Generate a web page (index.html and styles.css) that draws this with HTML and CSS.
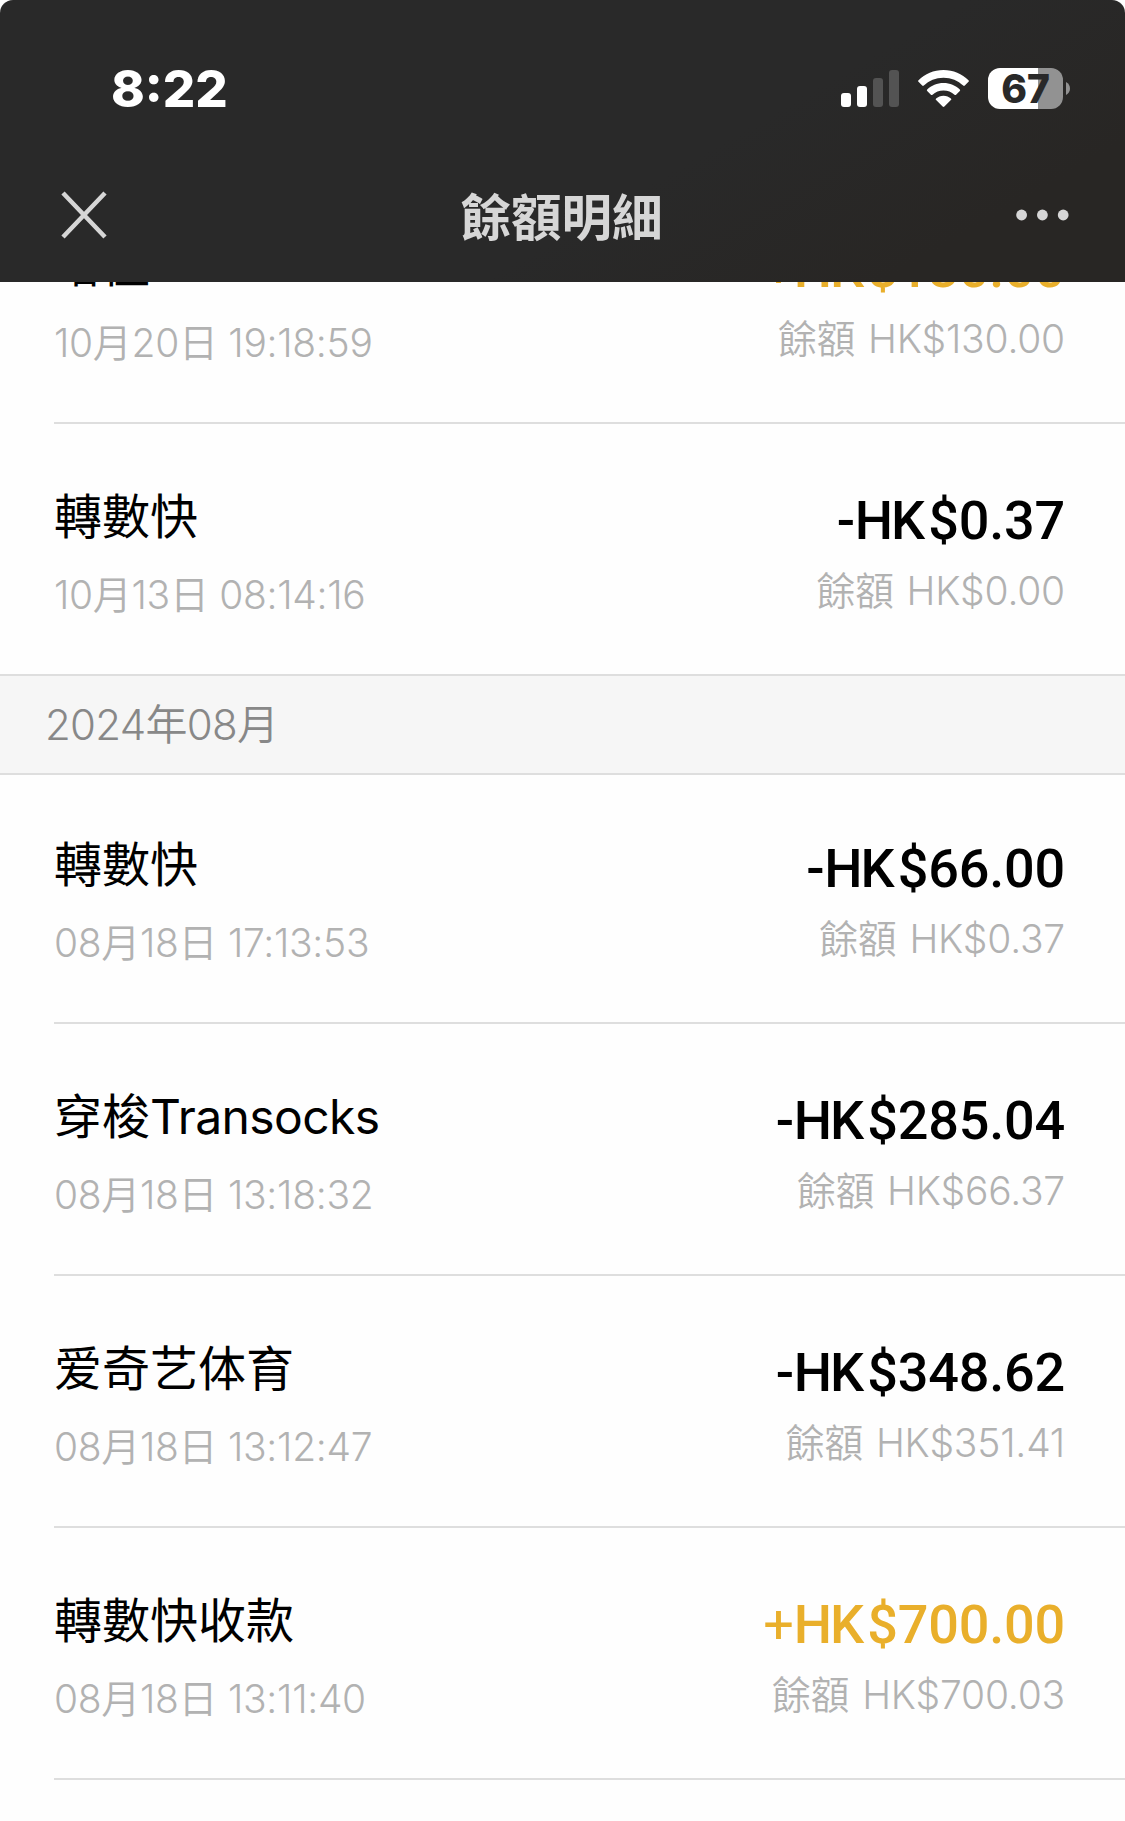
FILE: index.html
```html
<!DOCTYPE html>
<html lang="zh-Hant">
<head>
    <meta charset="UTF-8">
    <meta name="viewport" content="width=device-width, initial-scale=1.0">
    <title>餘額明細</title>
    <link rel="stylesheet" href="styles.css">
</head>
<body>

<header class="header">
    <div class="status-bar">
        <span class="clock">8:22</span>
        <div class="status-icons">
            <svg class="signal" width="58" height="37" viewBox="0 0 58 37">
                <rect x="0" y="23" width="10" height="14" rx="3" fill="#fff"/>
                <rect x="16" y="16" width="10" height="21" rx="3" fill="#fff"/>
                <rect x="32" y="8" width="10" height="29" rx="3" fill="#535353"/>
                <rect x="48" y="0" width="10" height="37" rx="3" fill="#535353"/>
            </svg>
            <svg class="wifi" width="51" height="37" viewBox="0 0 51 37" fill="#fff">
                <path d="M25.500 0C35.300 0 44.100 3.900 50.500 10.200Q51.300 11 50.500 11.800L46.800 15.600Q46 16.400 45.200 15.600C40.100 10.700 33.200 7.700 25.500 7.700S10.900 10.700 5.800 15.600Q5 16.400 4.200 15.600L0.500 11.800Q-0.300 11 0.500 10.200C6.900 3.900 15.700 0 25.500 0Z"/>
                <path d="M25.500 13C31.900 13 37.600 15.500 41.800 19.500Q42.600 20.300 41.800 21.100L38.100 24.700Q37.300 25.500 36.500 24.700C33.600 22 29.700 20.500 25.500 20.500S17.400 22 14.500 24.700Q13.700 25.500 12.900 24.700L9.200 21.100Q8.400 20.300 9.200 19.500C13.400 15.500 19.100 13 25.500 13Z"/>
                <path d="M25.500 25.700C28.400 25.700 31 26.800 32.900 28.500Q33.700 29.300 32.900 30.100L26.400 36.500Q25.500 37.300 24.600 36.500L18.100 30.100Q17.300 29.300 18.100 28.500C20 26.800 22.600 25.700 25.500 25.700Z"/>
            </svg>
            <div class="battery">
                <span class="battery-level">67</span>
                <svg class="battery-tip" width="4" height="13" viewBox="0 0 4 13">
                    <path d="M0 0C5.300 2.500 5.300 10.500 0 13Z" fill="#929292"/>
                </svg>
            </div>
        </div>
    </div>
    <div class="nav-bar">
        <svg class="close" width="46" height="48" viewBox="0 0 46 48" stroke="#d6d6d6" stroke-width="4.500">
            <path d="M2 2L44 46M44 2L2 46"/>
        </svg>
        <h1 class="nav-title">餘額明細</h1>
        <svg class="more" width="53" height="12" viewBox="0 0 53 12" fill="#d6d6d6">
            <circle cx="5.600" cy="6" r="5.400"/>
            <circle cx="26.400" cy="6" r="5.400"/>
            <circle cx="47.200" cy="6" r="5.400"/>
        </svg>
    </div>
</header>

<main class="list">
    <div class="record">
        <div class="info">
            <p class="name">增值</p>
            <p class="date">10月20日 19:18:59</p>
        </div>
        <div class="money">
            <p class="amount income"><span class="sign">+</span><span class="currency">HK</span>$130.00</p>
            <p class="balance">餘額 HK$130.00</p>
        </div>
    </div>
    <div class="record last">
        <div class="info">
            <p class="name">轉數快</p>
            <p class="date">10月13日 08:14:16</p>
        </div>
        <div class="money">
            <p class="amount"><span class="sign">-</span><span class="currency">HK</span>$0.37</p>
            <p class="balance">餘額 HK$0.00</p>
        </div>
    </div>

    <h2 class="month">2024年08月</h2>

    <div class="record">
        <div class="info">
            <p class="name">轉數快</p>
            <p class="date">08月18日 17:13:53</p>
        </div>
        <div class="money">
            <p class="amount"><span class="sign">-</span><span class="currency">HK</span>$66.00</p>
            <p class="balance">餘額 HK$0.37</p>
        </div>
    </div>
    <div class="record">
        <div class="info">
            <p class="name" lang="zh-Hans">穿梭<span class="latin">Transocks</span></p>
            <p class="date">08月18日 13:18:32</p>
        </div>
        <div class="money">
            <p class="amount"><span class="sign">-</span><span class="currency">HK</span>$285.04</p>
            <p class="balance">餘額 HK$66.37</p>
        </div>
    </div>
    <div class="record">
        <div class="info">
            <p class="name" lang="zh-Hans">爱奇艺体育</p>
            <p class="date">08月18日 13:12:47</p>
        </div>
        <div class="money">
            <p class="amount"><span class="sign">-</span><span class="currency">HK</span>$348.62</p>
            <p class="balance">餘額 HK$351.41</p>
        </div>
    </div>
    <div class="record">
        <div class="info">
            <p class="name">轉數快收款</p>
            <p class="date">08月18日 13:11:40</p>
        </div>
        <div class="money">
            <p class="amount income"><span class="sign">+</span><span class="currency">HK</span>$700.00</p>
            <p class="balance">餘額 HK$700.03</p>
        </div>
    </div>
</main>

</body>
</html>
```
FILE: styles.css
```css
* {
    box-sizing: border-box;
    margin: 0;
    padding: 0;
}
body {
    background: #fefefe;
    font-family: "Inter", "Noto Sans CJK TC", sans-serif;
    color: #000;
    height: 1821px;
    overflow: hidden;
}
.header {
    position: relative;
    z-index: 1;
    height: 282px;
    border-radius: 13px 13px 0 0;
    background: linear-gradient(150deg, #292929 60%, #282624 85%);
}
.status-bar {
    display: flex;
    justify-content: space-between;
    height: 148px;
    padding: 58px 55px 0 111px;
}
.clock {
    font-size: 51px;
    font-weight: 800;
    line-height: 62px;
    color: #fff;
}
.status-icons {
    display: flex;
    align-items: center;
    height: 61px;
}
.wifi {
    margin: 0 19px;
}
.battery {
    display: flex;
    align-items: center;
    gap: 3px;
}
.battery-level {
    width: 75px;
    height: 41px;
    border-radius: 12px;
    background: linear-gradient(90deg, #fff 50px, #929292 50px);
    color: #292929;
    font-size: 39px;
    font-weight: 800;
    line-height: 41px;
    text-align: center;
}
.nav-bar {
    display: flex;
    align-items: center;
    justify-content: space-between;
    height: 134px;
    padding: 0 56px 0 61px;
}
.nav-title {
    padding-top: 6px;
    font-size: 50.5px;
    font-weight: 700;
    line-height: 64px;
    color: #d6d6d6;
}

/* first record is scrolled under the header */
.list {
    margin-top: -110px;
}
.record {
    display: flex;
    justify-content: space-between;
    height: 252px;
    margin-left: 54px;
    padding-right: 60px;
    border-bottom: 2px solid #dedede;
}
.record.last {
    margin-left: 0;
    padding-left: 54px;
}
.info {
    padding-top: 61px;
}
.money {
    padding-top: 65px;
    text-align: right;
}
.name {
    font-size: 48px;
    font-weight: 400;
    line-height: 64px;
}
.name:lang(zh-Hans) {
    font-family: "Inter", "Noto Sans CJK SC", sans-serif;
}
.latin {
    letter-spacing: -0.6px;
}
.date,
.balance {
    font-size: 39px;
    font-weight: 350;
    line-height: 54px;
    color: #b2b2b2;
}
.date {
    margin-top: 19px;
    letter-spacing: -0.3px;
}
.amount {
    font-family: "Roboto", sans-serif;
    font-size: 54px;
    font-weight: 500;
    line-height: 64px;
    letter-spacing: -0.2px;
}
.currency {
    margin-right: 5px;
    letter-spacing: -2px;
}
.income {
    color: #e9af2b;
}
.income .sign {
    font-weight: 400;
}
.balance {
    margin-top: 11px;
    letter-spacing: -0.2px;
    word-spacing: 2px;
}
.month {
    height: 99px;
    margin-bottom: -3px;
    padding-left: 45px;
    border-bottom: 2px solid #dedede;
    background: #f6f6f6;
    font-size: 42px;
    font-weight: 350;
    line-height: 98px;
    letter-spacing: -0.7px;
    color: #888;
}
```
